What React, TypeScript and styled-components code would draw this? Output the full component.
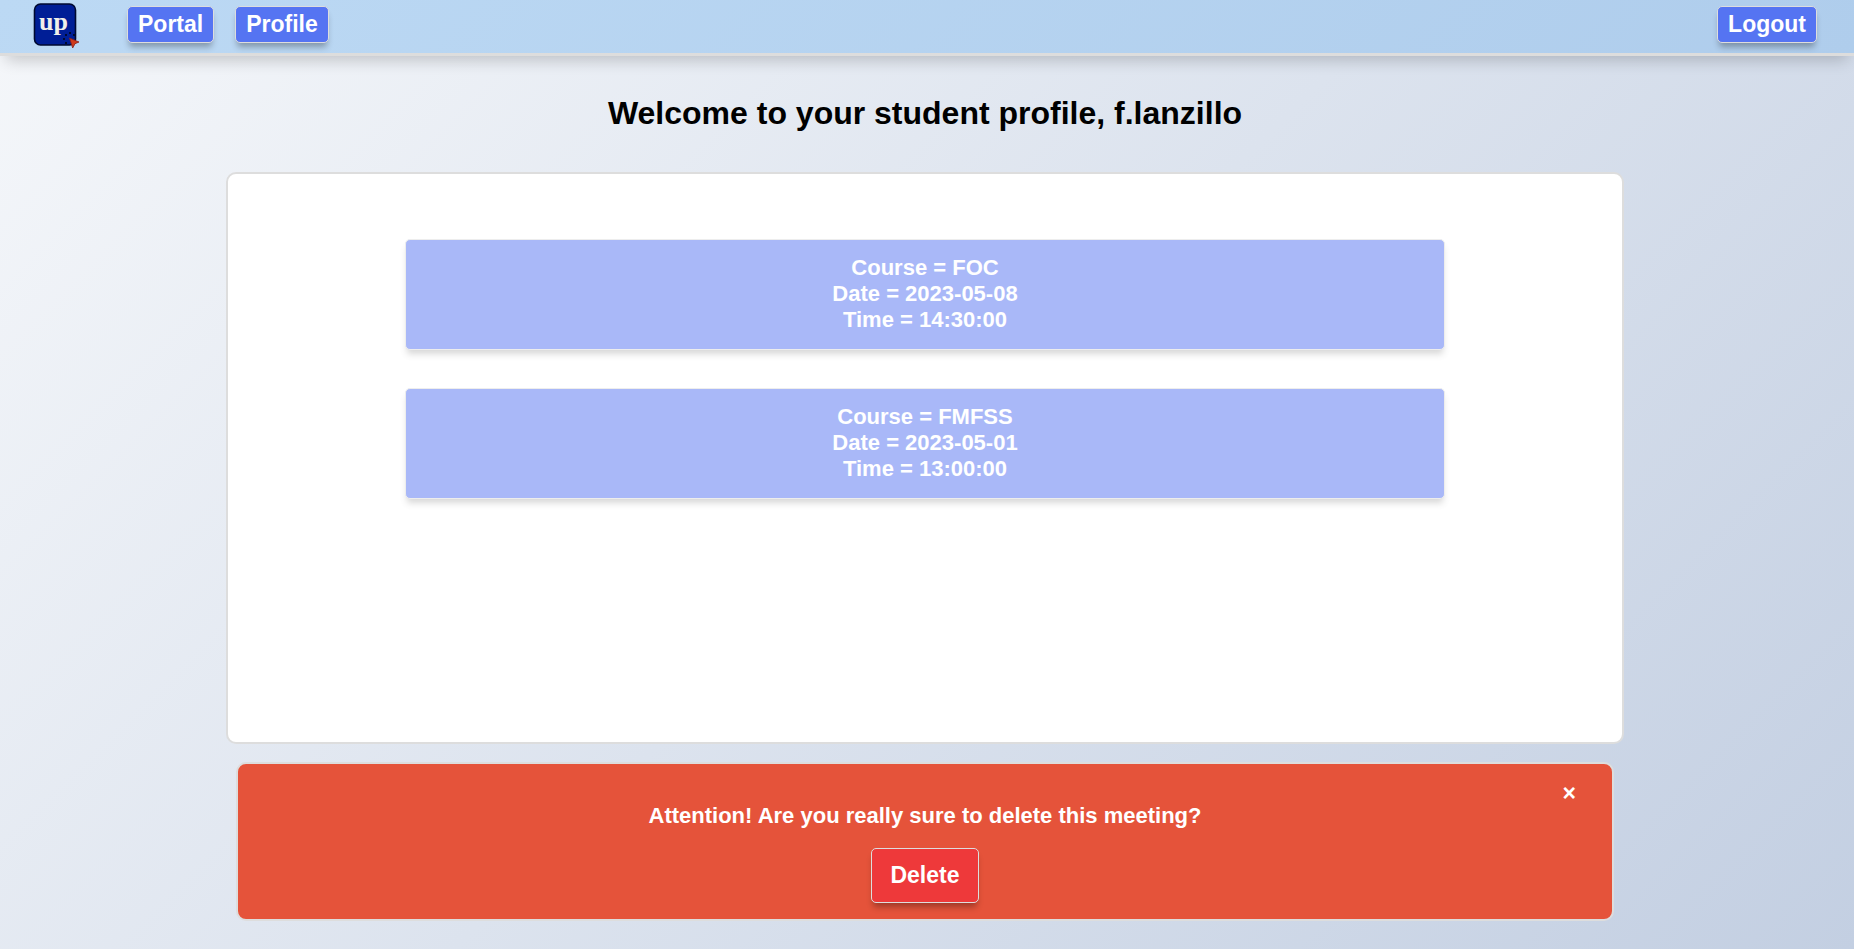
import React from "react";
import styled, { createGlobalStyle, css } from "styled-components";

const GlobalStyle = createGlobalStyle`
  *, *::before, *::after { box-sizing: border-box; }
  body {
    margin: 0;
    min-height: 100vh;
    font-family: "Liberation Sans", Arial, Helvetica, sans-serif;
    font-weight: 700;
    background: linear-gradient(135deg, #f5f7fa 0%, #c3cfe2 100%);
  }
`;

const Header = styled.header`
  display: flex;
  align-items: flex-start;
  justify-content: space-between;
  height: 56px;
  padding: 3px 37px 0 33px;
  border-bottom: 3px solid #ddd;
  background: linear-gradient(135deg, #bcd9f4 0%, #afcdec 100%);
  box-shadow: 0 10px 16px -6px rgba(0, 0, 0, 0.2);
`;

const Nav = styled.nav`
  display: flex;
  align-items: flex-start;
`;

const LogoLink = styled.a`
  display: block;
  height: 46px;
  margin-right: 48px;
`;

const NavItems = styled.div`
  display: flex;
  gap: 21px;
  padding-top: 3px;
`;

const raised = css`
  display: inline-block;
  border: 1px solid #ddd;
  border-radius: 5px;
  color: #fff;
  font: inherit;
  font-size: 23px;
  text-decoration: none;
  cursor: pointer;
  box-shadow: 0 6px 6px -2px rgba(0, 0, 0, 0.3);
`;

const NavLink = styled.a`
  ${raised}
  padding: 4px 10px 5px;
  line-height: 26px;
  background: #5574f2;
`;

const Main = styled.main`
  display: flex;
  flex-direction: column;
  padding: 39px 230px 28px 226px;
`;

const Title = styled.h1`
  margin: 0 0 41px;
  font-size: 32px;
  line-height: 36px;
  text-align: center;
  color: #000;
`;

const Panel = styled.section`
  display: flex;
  flex-direction: column;
  gap: 38px;
  min-height: 572px;
  padding: 65px 177px;
  border: 2px solid #ddd;
  border-radius: 10px;
  background: #fff;
`;

const Meeting = styled.button`
  padding: 15px 10px 16px;
  border: 1px solid #ddd;
  border-radius: 5px;
  background: #5574f2;
  color: #fff;
  font: inherit;
  font-size: 22px;
  line-height: 26px;
  opacity: 0.5;
  box-shadow: 0 6px 6px -2px rgba(0, 0, 0, 0.3);
`;

const Line = styled.span`
  display: block;
`;

const Alert = styled.section`
  position: relative;
  display: flex;
  flex-direction: column;
  align-items: center;
  gap: 19px;
  margin: 18px 10px 0;
  padding: 39px 20px 16px;
  border: 2px solid #ddd;
  border-radius: 10px;
  background: #e5533a;
  color: #fff;
`;

const Message = styled.p`
  margin: 0;
  font-size: 22px;
  line-height: 26px;
`;

const DeleteButton = styled.button`
  ${raised}
  padding: 13px 18px 14px;
  line-height: 26px;
  background: #ee393a;
`;

const CloseButton = styled.button`
  position: absolute;
  top: 16px;
  right: 36px;
  padding: 0;
  border: 0;
  background: none;
  color: #fff;
  font: inherit;
  font-size: 23px;
  line-height: 26px;
  cursor: pointer;
`;

const LogoText = styled.text`
  font-family: "Liberation Serif", "Times New Roman", serif;
  font-size: 26px;
  font-weight: 700;
  fill: #f0efe9;
`;

function Logo() {
  return (
    <svg width="46" height="46" viewBox="0 0 46 46" role="img" aria-label="up">
      <rect x="1.5" y="1" width="41" height="41" rx="6" fill="#001e96" stroke="#000a30" strokeWidth="1.6" />
      <LogoText x="6" y="27">up</LogoText>
      <g fill="#000a30">
        <rect x="32" y="31" width="2" height="2" />
        <rect x="36" y="29" width="2" height="2" />
        <rect x="40" y="31" width="2" height="2" />
        <rect x="30" y="35" width="2" height="2" />
        <rect x="32" y="39" width="2" height="2" />
      </g>
      <path d="M36.5 35 L46 39 L42 40.7 L39.7 45 Z" fill="#d03a1c" stroke="#8a2018" strokeWidth="0.8" />
    </svg>
  );
}

const meetings = [
  { course: "FOC", date: "2023-05-08", time: "14:30:00" },
  { course: "FMFSS", date: "2023-05-01", time: "13:00:00" },
];

export default function App() {
  return (
    <>
      <GlobalStyle />
      <Header>
        <Nav>
          <LogoLink href="#home"><Logo /></LogoLink>
          <NavItems>
            <NavLink href="#portal">Portal</NavLink>
            <NavLink href="#profile">Profile</NavLink>
          </NavItems>
        </Nav>
        <NavItems>
          <NavLink href="#logout">Logout</NavLink>
        </NavItems>
      </Header>
      <Main>
        <Title>Welcome to your student profile, f.lanzillo</Title>
        <Panel>
          {meetings.map((m) => (
            <Meeting key={m.course} type="button" disabled>
              <Line>Course = {m.course}</Line>
              <Line>Date = {m.date}</Line>
              <Line>Time = {m.time}</Line>
            </Meeting>
          ))}
        </Panel>
        <Alert role="alert">
          <CloseButton type="button" aria-label="Close">×</CloseButton>
          <Message>Attention! Are you really sure to delete this meeting?</Message>
          <DeleteButton type="button">Delete</DeleteButton>
        </Alert>
      </Main>
    </>
  );
}
